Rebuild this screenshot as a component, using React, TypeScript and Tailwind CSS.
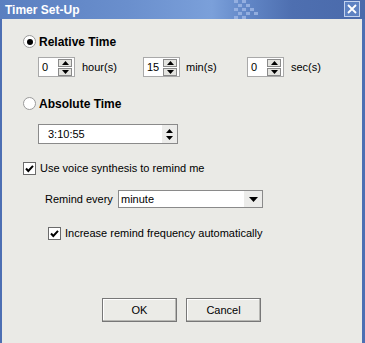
import React from 'react';

const font = { fontFamily: '"Liberation Sans", Arial, sans-serif' };

function Radio({ checked }: { checked?: boolean }) {
  return (
    <span className="flex h-[13px] w-[13px] items-center justify-center rounded-full border border-[#9a9a9a] bg-white">
      {checked && <span className="h-[6px] w-[6px] rounded-full bg-black" />}
    </span>
  );
}

function Check() {
  return (
    <span className="flex h-[13px] w-[13px] items-center justify-center border border-[#6b6b6b] bg-white">
      <svg viewBox="0 0 11 11" className="h-[11px] w-[11px]">
        <path d="M2 5.5 L4.3 8 L9 2.8" fill="none" stroke="#000" strokeWidth={2} />
      </svg>
    </span>
  );
}

function Arrow({ up }: { up?: boolean }) {
  return (
    <svg viewBox="0 0 7 4" className="h-[4px] w-[7px]">
      <path d={up ? 'M0 4 L3.5 0 L7 4 Z' : 'M0 0 L3.5 4 L7 0 Z'} fill="#000" />
    </svg>
  );
}

function Spinner({ value }: { value: string }) {
  return (
    <div className="flex h-[20px] w-[37px] items-center border border-[#a9a9a9] bg-white pr-[2px] pl-[3px]">
      <span className="flex-1 text-[11px] text-black">{value}</span>
      <div className="flex flex-col gap-[1px]">
        <span className="flex h-[8px] w-[14px] items-center justify-center border border-[#8a8a8a] bg-[#e4e4e0]">
          <Arrow up />
        </span>
        <span className="flex h-[8px] w-[14px] items-center justify-center border border-[#8a8a8a] bg-[#e4e4e0]">
          <Arrow />
        </span>
      </div>
    </div>
  );
}

export default function App() {
  return (
    <div className="flex h-[343px] w-[365px] flex-col bg-[#eaeae6] text-[11px] text-black" style={font}>
      {/* title bar */}
      <div className="relative flex h-[19px] items-center bg-[linear-gradient(90deg,#5a7fc0_0%,#6a8fcd_35%,#7ba0da_58%,#6186c6_68%,#4e6fb0_80%,#4a6aab_100%)] pl-[5px]">
        <span className="text-[12px] font-bold text-white">Timer Set-Up</span>
        <svg className="absolute top-0 left-[234px] h-[19px] w-[28px]" viewBox="0 0 28 19">
          <g fill="#9fb8e6" opacity="0.8">
            <rect x="0" y="0" width="4" height="3" />
            <rect x="8" y="0" width="4" height="3" />
            <rect x="4" y="4" width="4" height="3" />
            <rect x="12" y="4" width="4" height="3" />
            <rect x="0" y="8" width="4" height="3" />
            <rect x="8" y="8" width="4" height="3" />
            <rect x="16" y="8" width="4" height="3" />
            <rect x="4" y="12" width="4" height="3" />
            <rect x="12" y="12" width="4" height="3" />
            <rect x="20" y="12" width="4" height="3" />
            <rect x="0" y="16" width="4" height="3" />
            <rect x="8" y="16" width="4" height="3" />
          </g>
        </svg>
        <span className="absolute top-[1px] right-[5px] flex h-[16px] w-[16px] items-center justify-center border border-[#c2d2ee] bg-[#5e82c2]">
          <svg viewBox="0 0 10 10" className="h-[10px] w-[10px]">
            <path d="M1 1 L9 9 M9 1 L1 9" stroke="#fff" strokeWidth={1.8} />
          </svg>
        </span>
      </div>

      {/* body */}
      <div className="flex flex-1 flex-col border-r-[3px] border-l-[2px] border-[#4d6fb3] pl-[21px]">
        <div className="mt-[16px] flex h-[13px] items-center gap-[3px]">
          <Radio checked />
          <span className="text-[12px] font-bold">Relative Time</span>
        </div>

        <div className="mt-[9px] ml-[15px] flex h-[20px] items-center">
          <Spinner value="0" />
          <span className="ml-[7px] w-[61px]">hour(s)</span>
          <Spinner value="15" />
          <span className="ml-[6px] w-[61px]">min(s)</span>
          <Spinner value="0" />
          <span className="ml-[7px]">sec(s)</span>
        </div>

        <div className="mt-[20px] flex h-[13px] items-center gap-[3px]">
          <Radio />
          <span className="text-[12px] font-bold">Absolute Time</span>
        </div>

        <div className="mt-[14px] ml-[15px] flex h-[20px] w-[140px] items-center border border-[#8a8a8a] bg-white pl-[9px]">
          <span className="flex-1">3:10:55</span>
          <span className="flex h-full w-[15px] flex-col items-center justify-center gap-[3px] bg-[#ececea]">
            <Arrow up />
            <Arrow />
          </span>
        </div>

        <div className="mt-[18px] flex h-[13px] items-center gap-[4px]">
          <Check />
          <span>Use voice synthesis to remind me</span>
        </div>

        <div className="mt-[15px] ml-[22px] flex h-[18px] items-center">
          <span className="w-[73px]">Remind every</span>
          <div className="flex h-[18px] w-[145px] items-center border border-[#8a8a8a] bg-white pl-[2px]">
            <span className="flex-1">minute</span>
            <span className="flex h-full w-[18px] items-center justify-center bg-[#ececea]">
              <svg viewBox="0 0 9 5" className="h-[5px] w-[9px]">
                <path d="M0 0 L4.5 5 L9 0 Z" fill="#000" />
              </svg>
            </span>
          </div>
        </div>

        <div className="mt-[19px] ml-[25px] flex h-[13px] items-center gap-[4px]">
          <Check />
          <span>Increase remind frequency automatically</span>
        </div>

        <div className="mt-[58px] ml-[79px] flex gap-[9px]">
          <button className="h-[24px] w-[75px] border border-[#777] bg-[#ebebe7] shadow-[inset_-1px_-1px_0_#b8b8b4,inset_1px_1px_0_#fff] text-[11px]">
            OK
          </button>
          <button className="h-[24px] w-[75px] border border-[#777] bg-[#ebebe7] shadow-[inset_-1px_-1px_0_#b8b8b4,inset_1px_1px_0_#fff] text-[11px]">
            Cancel
          </button>
        </div>
      </div>
    </div>
  );
}
